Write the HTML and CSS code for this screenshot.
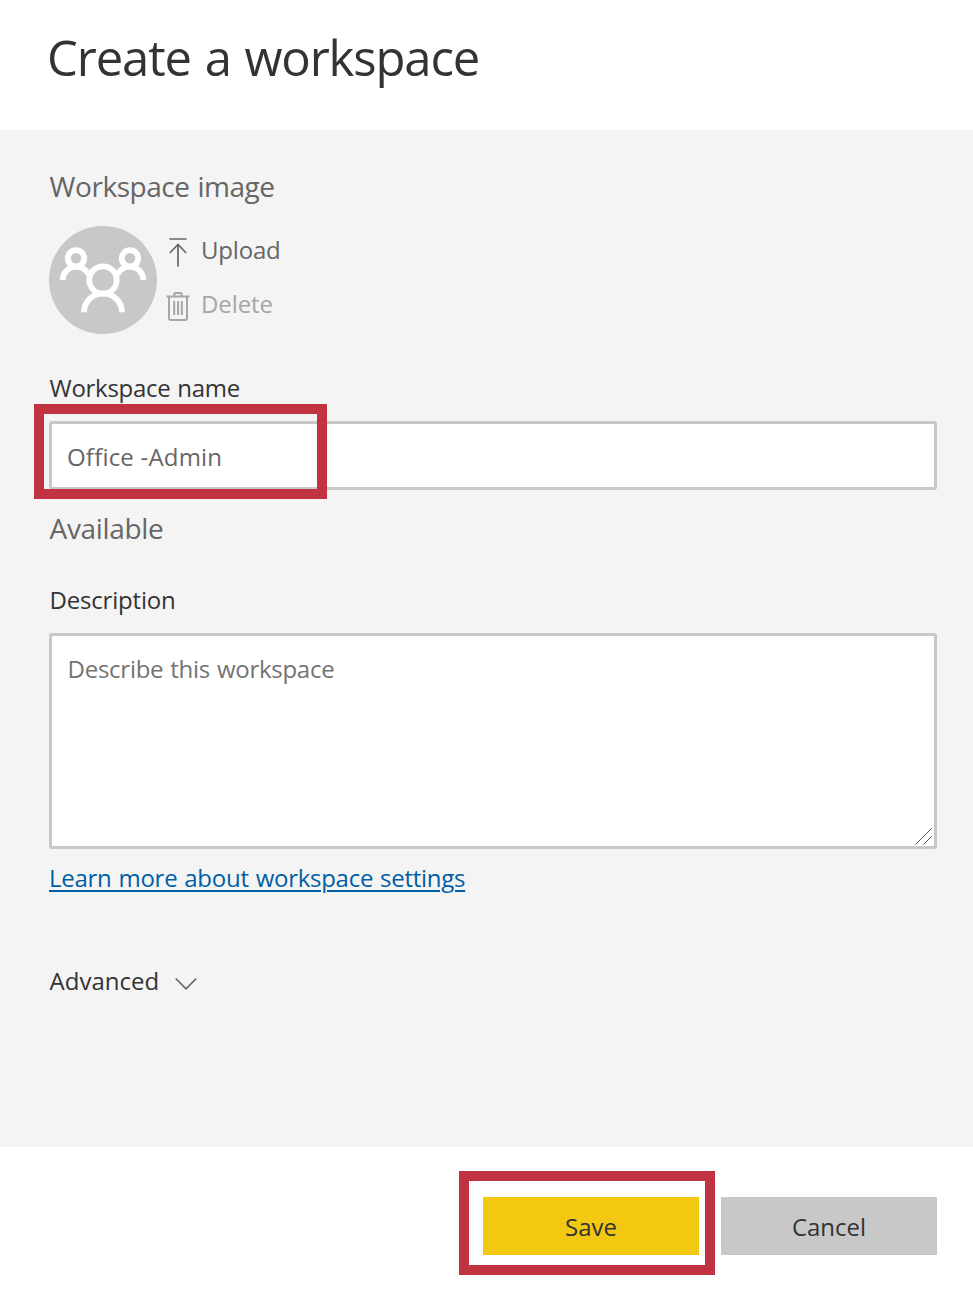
FILE: index.html
```html
<!DOCTYPE html>
<html lang="en">
<head>
<meta charset="utf-8">
<title>Create a workspace</title>
<link rel="stylesheet" href="styles.css">
</head>
<body>
<div class="panel">
  <header class="header"><h1 class="title"><span class="t-title">Create a workspace</span></h1></header>
  <main class="content">
    <h2 class="subhead"><span class="t-image">Workspace image</span></h2>
    <div class="image-row">
      <svg class="avatar" viewBox="0 0 108 108" fill="none" stroke="#fff" stroke-width="5.8">
        <circle cx="54" cy="54" r="54" fill="#c8c8c8" stroke="none"/>
        <circle cx="27" cy="32.300" r="8.200"/>
        <circle cx="81" cy="32.300" r="8.200"/>
        <path d="M13.700 54A13.500 13.500 0 0 1 39.500 48.500M94.300 54A13.500 13.500 0 0 0 68.500 48.500"/>
        <circle cx="54" cy="54" r="13.700"/>
        <path d="M35 86.300A19 19 0 0 1 73 86.300"/>
      </svg>
      <div class="actions">
        <div class="action">
          <svg class="icon" viewBox="0 0 24 34" fill="none" stroke="#666" stroke-width="1.700"><path d="M3.500 7h17M12 12v22.500M3.800 21l8.200-8.600 8.200 8.600"/></svg>
          <span class="t-upload">Upload</span>
        </div>
        <div class="action disabled">
          <svg class="icon" viewBox="0 0 24 34" fill="none" stroke="#a6a6a6" stroke-width="2"><path d="M.5 10.400h23M8.300 10V8q0-1 1-1h5.400q1 0 1 1v2M3 10.500V32q0 2 2 2h14q2 0 2-2V10.500M8.200 15v14M12 15v14M15.800 15v14"/></svg>
          <span class="t-delete">Delete</span>
        </div>
      </div>
    </div>
    <div class="label name-label"><span class="t-name">Workspace name</span></div>
    <div class="field name-field"><span class="t-office">Office -Admin</span><div class="highlight name-highlight"></div></div>
    <div class="subhead status"><span class="t-available">Available</span></div>
    <div class="label description-label"><span class="t-description">Description</span></div>
    <div class="field description-field"><span class="t-describe">Describe this workspace</span>
      <svg class="grip" viewBox="0 0 17 17" fill="none" stroke="#555" stroke-width="1"><path d="M.5 16.500l16-16M8.500 16.500l8-8"/></svg>
    </div>
    <a class="link"><span class="t-link">Learn more about workspace settings</span></a>
    <div class="label advanced"><span class="t-advanced">Advanced</span>
      <svg class="chevron" viewBox="0 0 22 14" fill="none" stroke="#666" stroke-width="1.700"><path d="M.7 1.500L11 11.800 21.300 1.500"/></svg>
    </div>
  </main>
  <footer class="footer">
    <div class="button save"><span class="t-save">Save</span><div class="highlight save-highlight"></div></div>
    <div class="button cancel"><span class="t-cancel">Cancel</span></div>
  </footer>
</div>
</body>
</html>
```
FILE: styles.css
```css
* { box-sizing: border-box; }
body { margin: 0; background: #fff; font-family: "Open Sans", sans-serif; font-size: 24px; font-weight: 380; line-height: 35px; color: #333; }
.panel { display: flex; flex-direction: column; width: 973px; height: 1292px; white-space: nowrap; }
.header { height: 130px; padding: 23px 47px 0; }
.title { margin: 0; font-size: 49px; line-height: 68px; font-weight: 370; }
.content { display: flex; flex-direction: column; height: 1017px; padding: 36px 36px 0 49px; background: #f4f4f4; }
.subhead { margin: 0; font-size: 28px; line-height: 40px; font-weight: 370; color: #666; }
.label, .link { height: 34px; }
.image-row { display: flex; gap: 9px; height: 108px; margin-top: 20px; }
.avatar { width: 108px; height: 108px; }
.actions { display: flex; flex-direction: column; gap: 20px; padding-top: 6px; }
.action { display: flex; gap: 11px; height: 34px; color: #666; }
.disabled { color: #a6a6a6; }
.icon { width: 24px; height: 34px; overflow: visible; }
.name-label { margin-top: 36px; }
.field { position: relative; background: #fff; border: 3px solid #c8c8c8; border-radius: 3px; padding: 15px 15px 0; color: #666; }
.name-field { height: 69px; margin-top: 17px; }
.highlight { position: absolute; border: 10px solid #c13340; }
.name-highlight { left: -18px; top: -20px; width: 293px; height: 95px; }
.status { margin-top: 18px; }
.description-label { margin-top: 34px; }
.description-field { height: 216px; margin-top: 17px; color: #737373; }
.grip { position: absolute; right: 2px; bottom: 1px; width: 17px; height: 17px; }
.link { margin-top: 11px; color: #005ea6; text-decoration: underline; text-decoration-thickness: 2px; text-underline-offset: 3px; }
.advanced { display: flex; margin-top: 69px; }
.advanced .t-advanced { width: 125.4px; }
.chevron { width: 22px; height: 14px; margin-top: 14px; }
.footer { display: flex; justify-content: flex-end; gap: 22px; padding: 50px 36px 0; }
.button { position: relative; width: 216px; height: 58px; padding-top: 12px; text-align: center; }
.save { background: #f2c811; }
.cancel { background: #c8c8c8; }
.save-highlight { left: -24px; top: -26px; width: 256px; height: 104px; }

/* Tracking per text run */
.t-title { letter-spacing: -1.1px; word-spacing: 2px; }
.t-image { letter-spacing: -.45px; word-spacing: 1px; }
.t-upload { letter-spacing: -.2px; }
.t-delete { letter-spacing: -.1px; }
.t-name { letter-spacing: -.3px; word-spacing: 1px; }
.t-office { letter-spacing: .2px; }
.t-available { letter-spacing: -.35px; }
.t-description { letter-spacing: -.2px; }
.t-describe, .t-link { letter-spacing: -.27px; word-spacing: 1px; }
.t-image, .t-name, .t-available, .t-description, .t-advanced, .t-describe { margin-left: .6px; }
```
